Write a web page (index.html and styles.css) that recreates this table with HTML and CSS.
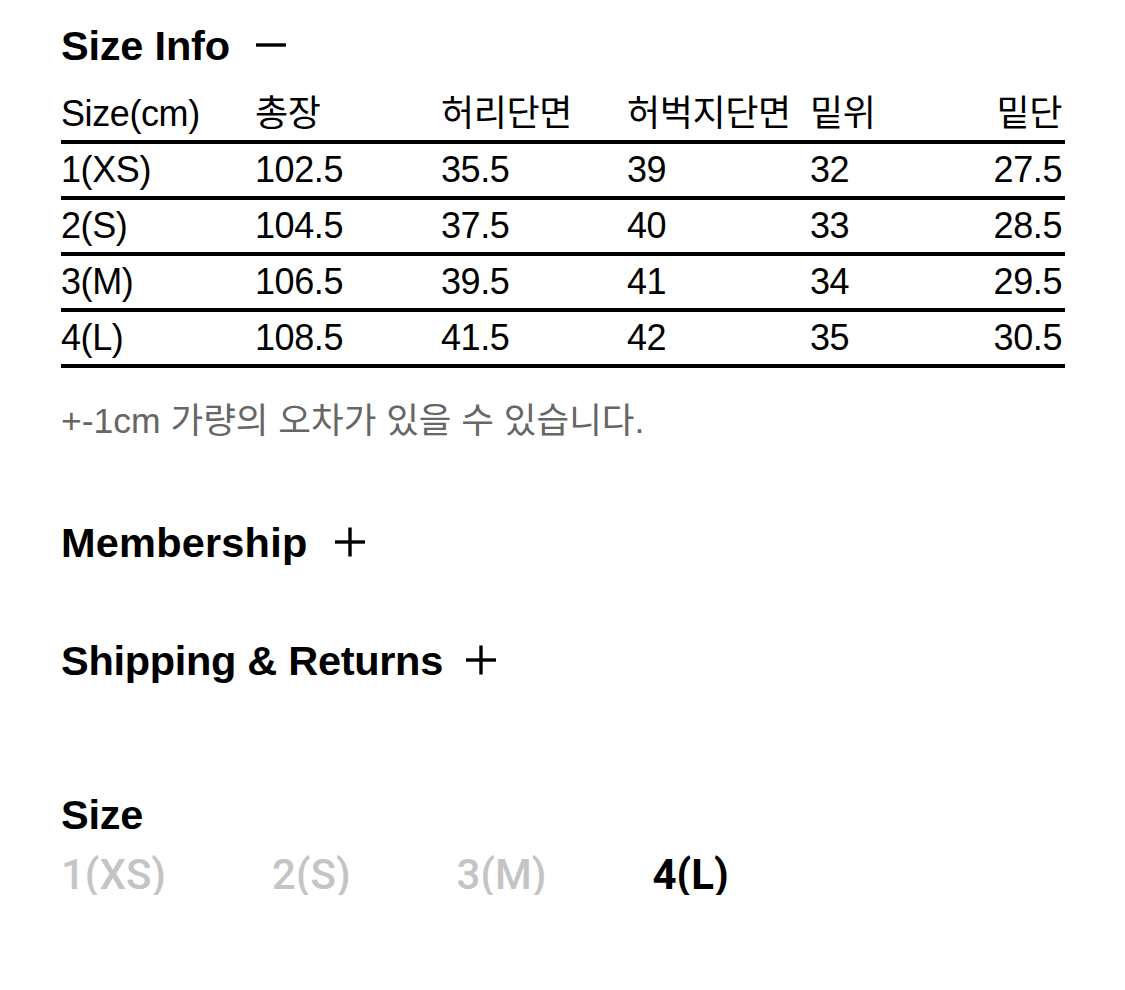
FILE: index.html
```html
<!DOCTYPE html>
<html lang="ko">
<head>
<meta charset="utf-8">
<title>Size Info</title>
<link rel="stylesheet" href="styles.css">
</head>
<body>
<main class="page">
  <section class="section section-size-info">
    <h2 class="heading">
      <span>Size Info</span>
      <svg class="toggle-icon" width="32" height="32" viewBox="0 0 32 32" aria-hidden="true"><line x1="1" y1="16" x2="31" y2="16" stroke="#000" stroke-width="3.4"/></svg>
    </h2>
    <table class="size-table">
      <colgroup>
        <col class="c1"><col class="c2"><col class="c3"><col class="c4"><col class="c5"><col class="c6">
      </colgroup>
      <thead>
        <tr><th>Size(cm)</th><th>총장</th><th>허리단면</th><th>허벅지단면</th><th>밑위</th><th class="right">밑단</th></tr>
      </thead>
      <tbody>
        <tr><td>1(XS)</td><td>102.5</td><td>35.5</td><td>39</td><td>32</td><td class="right">27.5</td></tr>
        <tr><td>2(S)</td><td>104.5</td><td>37.5</td><td>40</td><td>33</td><td class="right">28.5</td></tr>
        <tr><td>3(M)</td><td>106.5</td><td>39.5</td><td>41</td><td>34</td><td class="right">29.5</td></tr>
        <tr><td>4(L)</td><td>108.5</td><td>41.5</td><td>42</td><td>35</td><td class="right">30.5</td></tr>
      </tbody>
    </table>
    <p class="note">+-1cm 가량의 오차가 있을 수 있습니다.</p>
  </section>

  <section class="section section-membership">
    <h2 class="heading">
      <span>Membership</span>
      <svg class="toggle-icon" width="32" height="32" viewBox="0 0 32 32" aria-hidden="true"><line x1="1" y1="16" x2="31" y2="16" stroke="#000" stroke-width="3.4"/><line x1="16" y1="1.5" x2="16" y2="30.5" stroke="#000" stroke-width="3.4"/></svg>
    </h2>
  </section>

  <section class="section section-shipping">
    <h2 class="heading">
      <span>Shipping &amp; Returns</span>
      <svg class="toggle-icon" width="32" height="32" viewBox="0 0 32 32" aria-hidden="true"><line x1="1" y1="16" x2="31" y2="16" stroke="#000" stroke-width="3.4"/><line x1="16" y1="1.5" x2="16" y2="30.5" stroke="#000" stroke-width="3.4"/></svg>
    </h2>
  </section>

  <section class="section section-size">
    <h2 class="heading heading-size">Size</h2>
    <div class="size-options">
      <span class="size-option">1(XS)</span>
      <span class="size-option">2(S)</span>
      <span class="size-option">3(M)</span>
      <span class="size-option selected">4(L)</span>
    </div>
  </section>
</main>
</body>
</html>
```

FILE: styles.css
```css
html, body {
  margin: 0;
  padding: 0;
  background: #ffffff;
}

body {
  font-family: "Liberation Sans", Arial, "Noto Sans CJK KR", sans-serif;
  color: #000;
}

.page {
  padding: 26px 60px 0 61px;
  width: 1004px;
}

.heading {
  margin: 0;
  font-size: 41.5px;
  line-height: 40px;
  font-weight: 700;
  letter-spacing: -0.2px;
  display: flex;
  align-items: center;
  gap: 25px;
}

.section-membership .heading,
.section-shipping .heading {
  letter-spacing: 0;
}

.section-shipping .heading {
  letter-spacing: -0.3px;
  gap: 22px;
}

.section-membership .heading {
  letter-spacing: 0.2px;
  gap: 27px;
}

.toggle-icon {
  display: block;
  flex: none;
  margin-top: -2px;
}

.size-table {
  margin-top: 22px;
  width: 1004px;
  border-collapse: collapse;
  table-layout: fixed;
  font-size: 36px;
  line-height: 34px;
  letter-spacing: -0.4px;
}

.size-table col.c1 { width: 194px; }
.size-table col.c2 { width: 186px; }
.size-table col.c3 { width: 186px; }
.size-table col.c4 { width: 183px; }
.size-table col.c5 { width: 130px; }

.size-table th,
.size-table td {
  height: 52px;
  padding: 0;
  text-align: left;
  font-weight: 400;
  vertical-align: middle;
  border-bottom: 4px solid #000;
  white-space: nowrap;
}

.size-table .right {
  text-align: right;
  padding-right: 3px;
}

.note {
  margin: 37px 0 0;
  font-size: 35.5px;
  line-height: 32px;
  letter-spacing: 0;
  color: #666;
}

.section-membership {
  margin-top: 86px;
}

.section-shipping {
  margin-top: 78px;
}

.section-size {
  margin-top: 114px;
}

.size-options {
  margin-top: 19px;
  display: flex;
  gap: 106px;
  font-family: Roboto, "Liberation Sans", sans-serif;
  font-size: 42px;
  line-height: 41px;
  font-weight: 500;
}

.size-option {
  color: #c4c4c4;
}

.size-option.selected {
  color: #000;
  font-weight: 700;
}
```
